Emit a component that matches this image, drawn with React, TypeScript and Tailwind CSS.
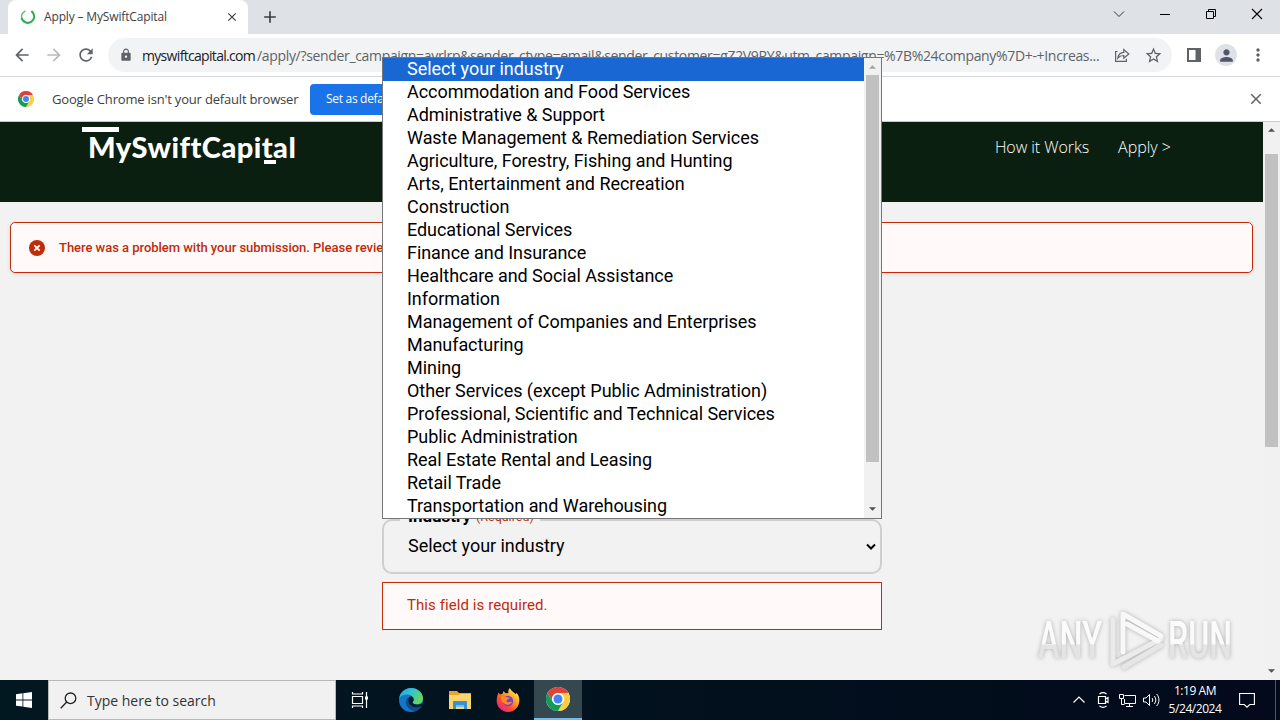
import React from 'react';
import {
  MdArrowBack,
  MdArrowForward,
  MdRefresh,
  MdLock,
  MdStarBorder,
  MdPerson,
  MdMoreVert,
  MdClose,
  MdAdd,
} from 'react-icons/md';

const industries = [
  'Select your industry',
  'Accommodation and Food Services',
  'Administrative & Support',
  'Waste Management & Remediation Services',
  'Agriculture, Forestry, Fishing and Hunting',
  'Arts, Entertainment and Recreation',
  'Construction',
  'Educational Services',
  'Finance and Insurance',
  'Healthcare and Social Assistance',
  'Information',
  'Management of Companies and Enterprises',
  'Manufacturing',
  'Mining',
  'Other Services (except Public Administration)',
  'Professional, Scientific and Technical Services',
  'Public Administration',
  'Real Estate Rental and Leasing',
  'Retail Trade',
  'Transportation and Warehousing',
];

const ChromeLogo: React.FC<{ className: string }> = ({ className }) => (
  <svg viewBox="0 0 48 48" className={className}>
    <circle cx="24" cy="24" r="24" fill="#fff" />
    <path d="M24 12h20.8A24 24 0 0 0 3.2 12l10.4 18A12 12 0 0 1 24 12z" fill="#db4437" />
    <path d="M34.4 30 24 48A24 24 0 0 0 44.8 12H24a12 12 0 0 1 10.4 18z" fill="#ffcd40" />
    <path d="M13.6 30 3.2 12A24 24 0 0 0 24 48l10.4-18a12 12 0 0 1-20.8 0z" fill="#0f9d58" />
    <circle cx="24" cy="24" r="11.5" fill="#fff" />
    <circle cx="24" cy="24" r="9" fill="#4285f4" />
  </svg>
);

const ArrowUp: React.FC<{ className: string }> = ({ className }) => (
  <svg viewBox="0 0 8 4" className={className} fill="currentColor">
    <path d="M0 4 4 0l4 4z" />
  </svg>
);

const ArrowDown: React.FC<{ className: string }> = ({ className }) => (
  <svg viewBox="0 0 8 4" className={className} fill="currentColor">
    <path d="M0 0h8L4 4z" />
  </svg>
);

const TabStrip = () => (
  <div className="flex h-[34px] shrink-0 justify-between bg-[#dee1e6]">
    <div className="flex">
      <div className="ml-2 flex h-full w-[240px] items-center rounded-t-lg bg-white pl-3 pr-[9px]">
        <svg viewBox="0 0 16 16" className="h-4 w-4" fill="none">
          <path d="M5 2.2A6.6 6.6 0 0 0 2 10" stroke="#5cc377" strokeWidth="1.4" strokeLinecap="round" />
          <path d="M12 2.600a6.400 6.400 0 1 1-10.200 7" stroke="#2bb24c" strokeWidth="2.1" strokeLinecap="round" />
        </svg>
        <span className="ml-2 w-[170px] whitespace-nowrap text-[12px] tracking-[-0.15px] text-[#3c4043]">
          Apply – MySwiftCapital
        </span>
        <MdClose className="ml-auto h-[14px] w-[14px] text-[#3c4043]" />
      </div>
      <MdAdd className="ml-3 mt-[7px] h-5 w-5 text-[#3c4043]" />
    </div>
    <div className="flex items-start pt-2 text-black">
      <svg viewBox="0 0 12 12" className="mr-[34px] h-3 w-3" fill="none" stroke="#333">
        <path d="m1 3.5 5 5 5-5" />
      </svg>
      <svg viewBox="0 0 12 12" className="mr-[34px] h-3 w-3" stroke="currentColor">
        <path d="M1 6.5h10" />
      </svg>
      <svg viewBox="0 0 12 12" className="mr-[34px] h-3 w-3" fill="none" stroke="currentColor">
        <path d="M1.5 3.5h7v7h-7zM3.5 3.5v-2h7v7h-2" />
      </svg>
      <svg viewBox="0 0 12 12" className="mr-[17px] h-3 w-3" stroke="currentColor" strokeWidth="1.1">
        <path d="m1 1 10 10M11 1 1 11" />
      </svg>
    </div>
  </div>
);

const Toolbar = () => (
  <div className="flex h-[43px] shrink-0 items-center border-b border-[#d5d7da] bg-white pl-3 text-[#5f6368]">
    <MdArrowBack className="h-5 w-5" />
    <MdArrowForward className="ml-3 h-5 w-5 text-[#babcbe]" />
    <MdRefresh className="ml-3 h-5 w-5" />
    <div className="ml-3 flex h-[34px] w-[1064px] items-center rounded-full bg-[#f1f3f4] pl-[11px]">
      <MdLock className="h-[14px] w-[14px]" />
      <div className="ml-[9px] flex w-[960px] whitespace-nowrap pt-px text-[14px] leading-5">
        <span className="w-[115px] shrink-0 tracking-[-0.68px] text-[#202124]">myswiftcapital.com</span>
        <span className="tracking-[-0.33px]">
          /apply/?sender_campaign=ayrlrp&sender_ctype=email&sender_customer=gZ2V9RY&utm_campaign=%7B%24company%7D+-+Increas...
        </span>
      </div>
      <svg viewBox="0 0 16 16" className="ml-3 h-4 w-4" fill="none" stroke="currentColor" strokeWidth="1.2">
        <path d="M3.5 4.5H1.6v9.8h10.8v-2.6M3.8 11c.5-3.600 2.500-5.400 6-5.600V2.500L14.800 7l-5 4.300V8.500C7.200 8.500 5.300 9.200 3.800 11z" />
      </svg>
      <MdStarBorder className="ml-[14px] h-[19px] w-[19px]" />
    </div>
    <svg viewBox="0 0 14 14" className="ml-[15px] h-[14px] w-[14px]">
      <path d="M1 1h12v12H1z" fill="none" stroke="currentColor" strokeWidth="2" />
      <path d="M8.500 0H14v14H8.500z" fill="currentColor" />
    </svg>
    <div className="ml-[14px] flex h-[22px] w-[22px] items-center justify-center rounded-full bg-[#dee1e6]">
      <MdPerson className="h-[19px] w-[19px] text-[#50556b]" />
    </div>
    <MdMoreVert className="ml-[11px] h-5 w-5" />
  </div>
);

const DefaultBrowserBar = () => (
  <div className="flex h-[45px] shrink-0 items-center border-b border-[#c9cbcd] bg-white pl-[18px]">
    <ChromeLogo className="h-4 w-4" />
    <span className="ml-[18px] w-[258px] whitespace-nowrap pt-px text-[13px] tracking-[-0.18px] text-[#3c4043]">
      Google Chrome isn't your default browser
    </span>
    <button className="h-[31px] w-[106px] whitespace-nowrap rounded-[4px] bg-[#1a73e8] pl-4 text-left text-[12px] tracking-[-0.3px] text-white">
      Set as default
    </button>
    <MdClose className="ml-auto mr-[15px] h-[18px] w-[18px] text-[#5f6368]" />
  </div>
);

const SiteHeader = () => (
  <header className="flex h-20 items-start justify-between bg-[#0b1f10] pl-[82px] pr-[92px]">
    <div className="relative flex flex-col pt-[5px]">
      <div className="h-[5px] w-[37px] bg-white" />
      <span className="-mt-px ml-[6px] whitespace-nowrap font-['Lato'] text-[29px] font-black leading-[32px] tracking-[0.45px] text-white">
        MySwiftCapital
      </span>
      <div className="absolute left-[182px] top-[38px] h-1 w-3 bg-white" />
    </div>
    <nav className="flex gap-[29px] pt-[14px] font-['Open_Sans'] text-[16px] font-light leading-[22px] text-white">
      <a className="tracking-[-0.05px]">How it Works</a>
      <a>Apply &gt;</a>
    </nav>
  </header>
);

const IndustryMenu = () => (
  <div className="absolute left-[382px] top-[57px] z-20 flex h-[462px] w-[500px] overflow-hidden border border-[#767676] bg-white">
    <ul className="flex-1 text-[18px] leading-[23px] tracking-[-0.05px] text-black">
      {industries.map((name, i) => (
        <li
          key={name}
          className={`h-[23px] whitespace-nowrap pl-6 ${i === 0 ? 'bg-[#1967d2] text-white' : ''}`}
        >
          <span className="relative -top-px">{name}</span>
        </li>
      ))}
    </ul>
    <div className="flex w-[17px] flex-col items-center bg-[#f1f1f1]">
      <ArrowUp className="mt-[7px] h-1 w-[7px] text-[#a3a3a3]" />
      <div className="mt-[6px] h-[387px] w-[13px] bg-[#c1c1c1]" />
      <ArrowDown className="mb-[7px] mt-auto h-1 w-[7px] text-[#505050]" />
    </div>
  </div>
);

const AnyRunMark = () => (
  <svg
    viewBox="0 0 200 66"
    className="absolute left-[1036px] top-[607px] h-[66px] w-[200px] drop-shadow-[0_0_2px_rgba(0,0,0,0.28)]"
    fill="none"
  >
    <defs>
      <linearGradient id="fade" x1="0" y1="0" x2="0" y2="1">
        <stop offset="0.55" stopColor="#fbfbfb" />
        <stop offset="0.58" stopColor="#e4e4e4" />
      </linearGradient>
    </defs>
    <g fill="url(#fade)" fontFamily="Roboto" fontSize="51" fontWeight="500">
      <text x="2" y="51" textLength="64" lengthAdjust="spacingAndGlyphs">ANY</text>
      <text x="132" y="51" textLength="64" lengthAdjust="spacingAndGlyphs">RUN</text>
    </g>
    <g stroke="#f8f8f8" strokeWidth="5" strokeLinejoin="round" strokeLinecap="round">
      <path d="m88 60 37-22" stroke="#e6e6e6" />
      <path d="M77 13v44l48-25" stroke="#ebebeb" />
      <path d="M87 45V7l38 22" />
      <path d="m91 17 31 17" />
    </g>
  </svg>
);

const Taskbar = () => (
  <div className="flex h-10 shrink-0 bg-gradient-to-r from-[#021821] to-[#020a1b] text-white">
    <div className="flex w-12 items-center justify-center">
      <svg viewBox="0 0 16 16" className="h-4 w-4" fill="currentColor">
        <path d="M0 2.200 6.500 1.300v6.200H0zM7.300 1.200 16 0v7.500H7.300zM0 8.400h6.500v6.200L0 13.700zM7.300 8.400H16V16l-8.700-1.200z" />
      </svg>
    </div>
    <div className="flex h-full w-72 items-center border border-[#b8b8b8] bg-[#f1f1f1] pl-[11px] text-[#222]">
      <svg viewBox="0 0 17 17" className="h-[17px] w-[17px]" fill="none" stroke="#222" strokeWidth="1.3">
        <circle cx="10.500" cy="6.300" r="5.300" />
        <path d="m6.700 10-6 6.300" />
      </svg>
      <span className="ml-[10px] text-[14px] text-[#333]">Type here to search</span>
    </div>
    <div className="flex w-12 items-center justify-center">
      <svg viewBox="0 0 18 16" className="h-4 w-[18px]" fill="none" stroke="currentColor" strokeWidth="1.2">
        <path d="M1.500 4.500h10v7h-10zM1.500 0v2h10V0M1.500 16v-2h10v2M15.500 0v16" />
        <path d="M14 4.500h3v3h-3z" fill="currentColor" stroke="none" />
      </svg>
    </div>
    <div className="flex w-[54px] items-center justify-center">
      <svg viewBox="0 0 24 24" className="h-6 w-6">
        <defs>
          <linearGradient id="edgeTop" x1="0" y1="0" x2="1" y2="0.500">
            <stop offset="0" stopColor="#249ee0" />
            <stop offset="0.500" stopColor="#32c4cf" />
            <stop offset="1" stopColor="#66d65c" />
          </linearGradient>
        </defs>
        <circle cx="12" cy="12" r="12" fill="#1277c9" />
        <path d="M.2 10.500C1 4.500 6 0 12.200 0 19 0 24 5 24 10.600c0 3.600-2.800 5.800-6.200 5.800-2.600 0-4.300-1-4.300-1.800 0-.6 1.200-1.200 1.200-3C14.700 8.700 11.800 6.500 8.300 6.500 4.600 6.500 1.700 8 .2 10.500z" fill="url(#edgeTop)" />
        <path d="M9.500 9.300c-3 2-3.500 6-1.300 9.300 2 3.200 5.500 5 9 4.200 2.600-1 4.600-2.700 5.700-5-6 3.600-13.300.8-13.700-5 0-1.400.2-2.500.3-3.500z" fill="#114b8b" />
        <path d="M13.500 14.600c0-.6 1.200-1.200 1.200-3 0-1.400-.9-2.700-2.400-3.500-2.200.6-3.300 2.400-3.100 4.700.400 5.800 7.700 8.600 13.700 5 .6-1 .8-2.300.4-2.900-1.500 1.100-3.400 1.500-5.500 1.500-2.600 0-4.300-1-4.300-1.800z" fill="#04202f" />
      </svg>
    </div>
    <div className="flex w-11 items-center justify-center">
      <svg viewBox="0 0 22 19" className="h-[19px] w-[22px]">
        <path d="M0 0h8l2 2h12v5H0z" fill="#e6a52e" />
        <path d="M0 4h9l2-1h11v15H0z" fill="#fbd56b" />
        <path d="M4 10h14v8h-3v-4H7v4H4z" fill="#3592d4" />
        <path d="M7 14h8v2H7z" fill="#7cc0ea" />
      </svg>
    </div>
    <div className="flex w-[52px] items-center justify-center">
      <svg viewBox="0 0 24 24" className="h-6 w-6">
        <defs>
          <linearGradient id="fox" x1="1" y1="0" x2="0.200" y2="1">
            <stop offset="0.100" stopColor="#fff04a" />
            <stop offset="0.450" stopColor="#ff9a1f" />
            <stop offset="0.700" stopColor="#ff4b32" />
            <stop offset="1" stopColor="#e4228c" />
          </linearGradient>
        </defs>
        <path d="M2.500 4.500 4 6.500l2.500-.8L7.500 3l2 2.300 3-.3C12 3 12.500 1.200 14 .3c.8 2.700 4 3.700 5.800 6l.7-1.500c2.300 2.800 3 5.200 2.800 8A11.300 11.300 0 0 1 .700 12.500c0-3 .8-5.500 1.800-8z" fill="url(#fox)" />
        <circle cx="12" cy="13" r="5.200" fill="#7542d6" />
        <path d="M5 9c2-1.500 4-1 5.500.2l3 .6c-.2 1.500-2.300 1.500-2.800 2.400-.5 1.300.3 2.300 2 2 1.300-.2 2.300-.8 3.300-.2-1 2.300-4 3.300-6.500 2.200C6.500 15 5 12.500 5 9z" fill="#ff8b22" />
      </svg>
    </div>
    <div className="flex w-12 items-center justify-center border-b-2 border-[#76b9ed] bg-[#35474f]">
      <ChromeLogo className="h-6 w-6" />
    </div>
    <div className="ml-auto flex items-center">
      <svg viewBox="0 0 12 8" className="h-2 w-3" fill="none" stroke="currentColor" strokeWidth="1.2">
        <path d="m.5 6.500 5.500-5.500 5.500 5.500" />
      </svg>
      <svg viewBox="0 0 12 16" className="ml-3 h-4 w-3" fill="none" stroke="currentColor" strokeWidth="1.2">
        <path d="M1.500 4.500h7v7h-7zM8.500 7l2.500-1.500v5L8.500 9M2.500 2C4.500.5 7.500.5 9.500 2M2.500 14c2 1.500 5 1.500 7 0" />
      </svg>
      <svg viewBox="0 0 17 15" className="ml-[10px] h-[15px] w-[17px]" fill="none" stroke="currentColor">
        <path d="M5.500 2.500h11v8h-11V6M10.500 10.500v3M7 13.500h7M.5 1.500h4v4h-4zM2.500 5.500v6h3" />
      </svg>
      <svg viewBox="0 0 17 14" className="ml-[7px] h-[14px] w-[17px]" fill="none" stroke="currentColor">
        <path d="M.5 5h2.500L6.500 1.500v11L3 9H.5zM9 5c1 1.200 1 2.800 0 4M11.300 3c2 2.500 2 5.500 0 8M13.700 1c3 3.800 3 8.200 0 12" />
      </svg>
      <div className="ml-1 flex w-[62px] flex-col items-center text-[12px] leading-[18px] tracking-[-0.45px]">
        <span>1:19 AM</span>
        <span>5/24/2024</span>
      </div>
      <svg viewBox="0 0 16 16" className="ml-[13px] mr-5 h-4 w-4" fill="none" stroke="currentColor" strokeWidth="1.1">
        <path d="M.6 1.500h14.800v11h-4.600L8 15.200l-2.800-2.700H.6z" />
      </svg>
      <div className="mr-1 h-10 w-px bg-[#4c5561]" />
    </div>
  </div>
);

const App: React.FC = () => {
  return (
    <div className="relative flex h-[720px] w-[1280px] flex-col overflow-hidden bg-white font-['Open_Sans',sans-serif]">
      <TabStrip />
      <Toolbar />
      <DefaultBrowserBar />

      {/* Page and its scrollbar */}
      <div className="flex h-[558px] shrink-0 bg-[#f2f2f2] font-['Roboto',sans-serif]">
        <main className="w-[1263px]">
          <SiteHeader />
          <div className="mx-[10px] mt-5 flex h-[51px] items-center rounded-[5px] border border-[#c02b0a] bg-[#fff9f9] pl-[18px] text-[#c02b0a] shadow-[0_1px_4px_rgba(0,0,0,0.1)]">
            <svg viewBox="0 0 16 16" className="h-4 w-4">
              <circle cx="8" cy="8" r="8" fill="currentColor" />
              <path d="m5.300 5.300 5.400 5.400m0-5.400-5.400 5.400" stroke="#fff" strokeWidth="1.800" />
            </svg>
            <p className="ml-[14px] whitespace-nowrap text-[13px] font-medium tracking-[-0.03px]">
              There was a problem with your submission. Please review the fields below.
            </p>
          </div>

          <div className="mx-auto ml-[382px] mt-[235px] w-[500px]">
            <label className="relative z-10 ml-[18px] flex h-4 w-[140px] items-center bg-[#f2f2f2] pl-2 text-[17px] font-bold leading-4 text-black">
              Industry
              <span className="ml-[5px] pt-px text-[12.500px] font-normal text-[#c02b0a]">(Required)</span>
            </label>
            <div className="-mt-[5px] flex h-[55px] items-center justify-between rounded-[10px] border-2 border-[#cfcfcf] bg-[#f2f2f2] pl-6 pr-[3px] text-[18px] tracking-[-0.05px] text-black">
              <span className="relative -top-px">Select your industry</span>
              <svg viewBox="0 0 12 8" className="h-2 w-3" fill="none" stroke="#000" strokeWidth="2">
                <path d="m2 1.500 4 4 4-4" />
              </svg>
            </div>
            <div className="mt-2 h-12 border border-[#c02b0a] bg-[#fff9f9] pl-6 pt-[10px] text-[15px] leading-6 tracking-[0.08px] text-[#c02b0a]">
              This field is required.
            </div>
          </div>
        </main>
        <div className="flex w-[17px] flex-col items-center bg-[#f1f1f1] text-[#505050]">
          <ArrowUp className="mt-[6px] h-1 w-[7px]" />
          <div className="mt-[22px] h-[293px] w-[13px] bg-[#c1c1c1]" />
          <ArrowDown className="mb-[7px] mt-auto h-1 w-[7px]" />
        </div>
      </div>

      <Taskbar />

      <div className="font-['Roboto',sans-serif]">
        <IndustryMenu />
      </div>
      <AnyRunMark />
    </div>
  );
};

export default App;
